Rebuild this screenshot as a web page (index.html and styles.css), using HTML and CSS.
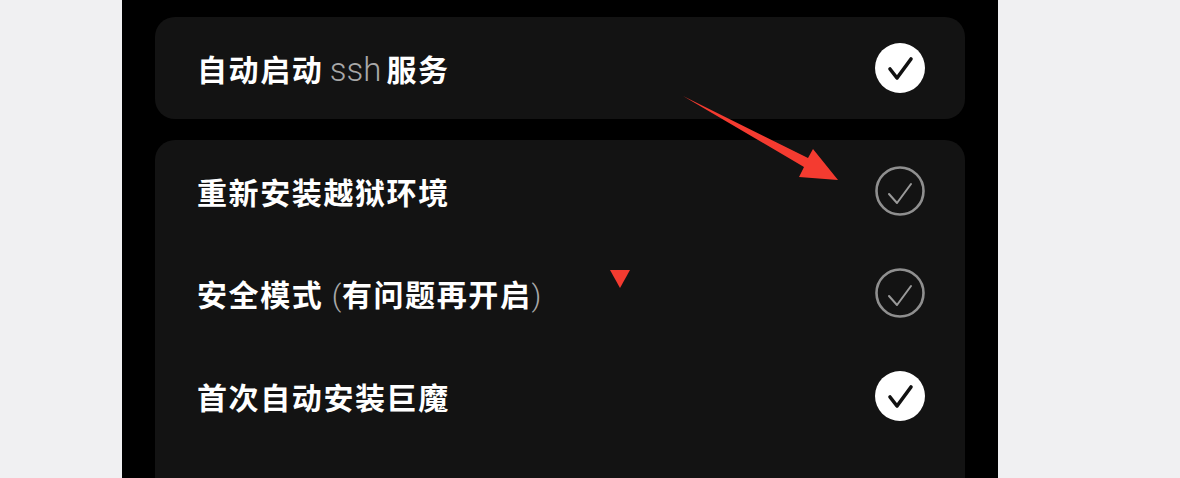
FILE: index.html
```html
<!DOCTYPE html>
<html lang="zh">
<head>
<meta charset="utf-8">
<link rel="stylesheet" href="styles.css">
</head>
<body>
<div class="page">
  <div class="side"></div>
  <main class="phone">
    <section class="card card-single">
      <div class="row">
        <span class="label">自动启动 <span class="thin ssh">ssh</span>服务</span>
        <svg class="check on" viewBox="0 0 50 50"><circle cx="25" cy="25" r="25"/><path d="M15 26 L22 35 L36 16"/></svg>
      </div>
    </section>
    <section class="card card-list">
      <div class="row">
        <span class="label">重新安装越狱环境</span>
        <svg class="check off" viewBox="0 0 50 50"><circle cx="25" cy="25" r="23.5"/><path d="M14 28 L22 37 L36 18"/></svg>
      </div>
      <div class="row">
        <span class="label">安全模式 <span class="thin">(</span>有问题再开启<span class="thin">)</span></span>
        <svg class="check off" viewBox="0 0 50 50"><circle cx="25" cy="25" r="23.5"/><path d="M14 28 L22 37 L36 18"/></svg>
      </div>
      <div class="row">
        <span class="label">首次自动安装巨魔</span>
        <svg class="check on" viewBox="0 0 50 50"><circle cx="25" cy="25" r="25"/><path d="M15 26 L22 35 L36 16"/></svg>
      </div>
    </section>
  </main>
  <div class="side"></div>
</div>
<svg class="annot" viewBox="0 0 1180 478" width="1180" height="478">
  <polygon points="683,96 808,158 813,149 838,180 799,177 804,167" />
  <polygon points="610,270 630,270 620,288" />
</svg>
</body>
</html>
```

FILE: styles.css
```css
html, body {
  margin: 0;
  padding: 0;
}
body {
  width: 1180px;
  height: 478px;
  overflow: hidden;
  background: #f0f0f2;
  font-family: "Noto Sans CJK SC", "Noto Sans", sans-serif;
  position: relative;
}
.page {
  display: flex;
  height: 478px;
}
.side {
  flex: 1;
  background: #f0f0f2;
}
.side:first-child {
  flex: 0 0 122px;
}
.phone {
  flex: 0 0 876px;
  background: #000;
  padding: 17px 33px 0;
  box-sizing: border-box;
  display: flex;
  flex-direction: column;
  gap: 21px;
  overflow: hidden;
}
.card {
  background: #131313;
  border-radius: 20px;
  padding: 0 40px 0 42px;
}
.card-single {
  height: 102px;
  display: flex;
  align-items: center;
}
.card-single .row {
  flex: 1;
}
.card-list {
  flex: 1;
  border-bottom-left-radius: 0;
  border-bottom-right-radius: 0;
  display: flex;
  flex-direction: column;
  padding-top: 0;
}
.card-list .row {
  height: 103px;
}
.card-list .row:first-child {
  height: 101px;
}
.row {
  display: flex;
  align-items: center;
  justify-content: space-between;
}
.label {
  color: #fff;
  font-size: 30px;
  font-weight: 700;
  letter-spacing: 1.6px;
  white-space: pre;
}
.thin {
  font-family: "Roboto", "Noto Sans", sans-serif;
  font-weight: 300;
  color: #a8a8a8;
  letter-spacing: 0.5px;
}
.ssh {
  font-size: 33px;
  letter-spacing: 0;
  margin-right: 5px;
  margin-left: -2px;
}
.check {
  width: 50px;
  height: 50px;
  display: block;
}
.check path {
  fill: none;
  stroke-linecap: round;
  stroke-linejoin: round;
}
.check.on circle {
  fill: #fff;
}
.check.on path {
  stroke: #111;
  stroke-width: 3.6;
}
.check.off circle {
  fill: none;
  stroke: #8f8f8f;
  stroke-width: 2.6;
}
.check.off path {
  stroke: #9a9a9a;
  stroke-width: 2;
}
.annot {
  position: absolute;
  left: 0;
  top: 0;
  pointer-events: none;
}
.annot polygon {
  fill: #f43b30;
}
```
